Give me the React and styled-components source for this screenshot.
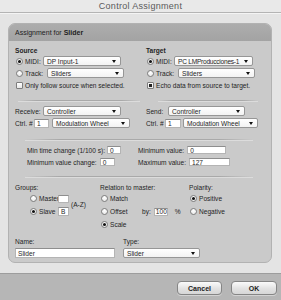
import styled, { createGlobalStyle } from "styled-components";

const GlobalStyle = createGlobalStyle`
  html, body {
    margin: 0;
    padding: 0;
  }
  body {
    font-family: "Liberation Sans", Arial, sans-serif;
    font-size: 6.6px;
    color: #1f1f1f;
  }
`;

const Window = styled.div`
  width: 281px;
  height: 300px;
  display: flex;
  flex-direction: column;
  background: #e4e4e4;
  overflow: hidden;
`;

const TitleBar = styled.div`
  height: 12px;
  flex: none;
  display: flex;
  align-items: center;
  justify-content: center;
  background: #e9e9e9;
  border-bottom: 1px solid #b4b4b4;
  box-shadow: 0 1px 0 #f4f4f4;
  font-size: 9px;
  color: #5a5a5a;
  letter-spacing: 0.3px;
`;

const Body = styled.div`
  flex: none;
  padding: 10px 9px 10px 8px;
`;

const Panel = styled.section`
  height: 240px;
  box-sizing: border-box;
  border: 1px solid #b2b2b2;
  border-radius: 7px;
  background: #cacaca;
  overflow: hidden;
  display: flex;
  flex-direction: column;
`;

const PanelHeader = styled.div`
  height: 17px;
  flex: none;
  display: flex;
  align-items: center;
  padding-left: 6px;
  background: linear-gradient(#adadad, #a3a3a3);
  font-size: 7px;
  color: #222;

  b {
    margin-left: 2px;
  }
`;

const Content = styled.div`
  padding: 0 13px 0 6px;
`;

const TwoCols = styled.div`
  display: grid;
  grid-template-columns: 131px 1fr;
  padding-top: 6px;
`;

const Column = styled.div`
  display: flex;
  flex-direction: column;
`;

const SectionTitle = styled.div`
  height: 8px;
  line-height: 8px;
  font-weight: bold;
`;

const Row = styled.div`
  height: ${(p) => p.$h || 12}px;
  display: flex;
  align-items: center;
  gap: ${(p) => p.$gap || 0}px;
`;

const Lead = styled.div`
  width: ${(p) => p.$w}px;
  flex: none;
  display: flex;
  align-items: center;
  gap: 2px;
  white-space: nowrap;
`;

const Radio = styled.span`
  width: 7px;
  height: 7px;
  box-sizing: border-box;
  flex: none;
  margin-left: 1px;
  border: 1px solid #7d7d7d;
  border-radius: 50%;
  background: radial-gradient(circle at 50% 30%, #ffffff, #e4e4e4);
  display: flex;
  align-items: center;
  justify-content: center;

  &::after {
    content: "";
    width: 3px;
    height: 3px;
    border-radius: 50%;
    background: ${(p) => (p.$on ? "#111" : "transparent")};
  }
`;

const Check = styled.span`
  width: 7px;
  height: 7px;
  box-sizing: border-box;
  flex: none;
  margin-left: 1px;
  border: 1px solid #7d7d7d;
  border-radius: 1px;
  background: linear-gradient(#ffffff, #e6e6e6);
  display: flex;
  align-items: center;
  justify-content: center;

  &::after {
    content: "";
    width: 3px;
    height: 3px;
    background: ${(p) => (p.$on ? "#222" : "transparent")};
  }
`;

const Select = styled.div`
  width: ${(p) => p.$w}px;
  height: 10px;
  flex: none;
  box-sizing: border-box;
  display: flex;
  align-items: center;
  justify-content: space-between;
  gap: 2px;
  padding: 0 4px 0 3px;
  margin-left: ${(p) => p.$ml || 0}px;
  border: 1px solid #969696;
  border-radius: 2px;
  background: linear-gradient(#ffffff, #f3f3f3);
  white-space: nowrap;
  overflow: hidden;
  letter-spacing: ${(p) => p.$tight ? "-0.25px" : "normal"};

  &::after {
    content: "";
    flex: none;
    border-left: 2.5px solid transparent;
    border-right: 2.5px solid transparent;
    border-top: 3px solid #111;
  }
`;

const Field = styled.div`
  width: ${(p) => p.$w}px;
  height: ${(p) => p.$h || 9}px;
  flex: none;
  box-sizing: border-box;
  display: flex;
  align-items: center;
  padding-left: ${(p) => p.$pl ?? 2}px;
  border: 1px solid #b4b4b4;
  border-top-color: #8e8e8e;
  background: #fff;
  white-space: nowrap;
  overflow: hidden;
  margin-left: ${(p) => p.$ml || 0}px;
`;

const Sep = styled.div`
  height: 1px;
  margin: ${(p) => p.$m};
  background: linear-gradient(
    to right,
    rgba(150, 150, 150, 0),
    #a9a9a9 15%,
    #a9a9a9 85%,
    rgba(150, 150, 150, 0)
  );
  box-shadow: 0 1px 0 rgba(255, 255, 255, 0.35);
`;

const Thresholds = styled.div`
  display: grid;
  grid-template-columns: 111px 1fr;
  padding-left: 12px;
  padding-top: 4px;
`;

const Bottom = styled.div`
  display: grid;
  grid-template-columns: 85px 89px 1fr;
  padding-top: 7px;
`;

const Label = styled.div`
  height: 8px;
  line-height: 8px;
  white-space: nowrap;
`;

const GroupGrid = styled.div`
  display: grid;
  grid-template-columns: 29px 12px auto;
  grid-template-rows: 13px 13px;
  align-items: center;
  padding-left: 14px;
`;

const AZ = styled.span`
  grid-column: 3;
  grid-row: 1 / span 2;
  align-self: center;
  padding-left: 1px;
  margin-top: -2px;
`;

const Unit = styled.span`
  margin-left: 7px;
`;

const NameRow = styled.div`
  display: grid;
  grid-template-columns: 108px 1fr;
  padding-top: 7px;
`;

const NameCol = styled.div`
  display: flex;
  flex-direction: column;
  gap: 2px;
`;

const Footer = styled.footer`
  flex: 1;
  display: flex;
  justify-content: flex-end;
  align-items: flex-start;
  gap: 9px;
  padding: 7px 4px 0 0;
  background: #b6b6b6;
  border-top: 1px solid #9d9d9d;
`;

const Button = styled.button`
  width: ${(p) => p.$w}px;
  height: 14px;
  padding: 0;
  border: 1px solid #858585;
  border-radius: 4px;
  background: linear-gradient(#fbfbfb, #e2e2e2 55%, #d6d6d6);
  box-shadow: 0 1px 0 rgba(255, 255, 255, 0.4);
  font-family: "Liberation Sans", Arial, sans-serif;
  font-size: 7px;
  font-weight: bold;
  color: #222;
`;

const RadioItem = ({ on, children, w }) => (
  <Lead $w={w}>
    <Radio $on={on} />
    <span>{children}</span>
  </Lead>
);

const App = () => (
  <>
    <GlobalStyle />
    <Window>
      <TitleBar>Control Assignment</TitleBar>
      <Body>
        <Panel>
          <PanelHeader>
            Assignment for <b>Slider</b>
          </PanelHeader>
          <Content>
            <TwoCols>
              <Column>
                <SectionTitle>Source</SectionTitle>
                <Row>
                  <RadioItem on w={28}>MIDI:</RadioItem>
                  <Select $w={78}>DP Input-1</Select>
                </Row>
                <Row>
                  <RadioItem w={32}>Track:</RadioItem>
                  <Select $w={77}>Sliders</Select>
                </Row>
                <Row $gap={2}>
                  <Check />
                  <span>Only follow source when selected.</span>
                </Row>
                <Sep $m="9px 6px 4px 3px" />
                <Row>
                  <Lead $w={28}>Receive:</Lead>
                  <Select $w={78}>Controller</Select>
                </Row>
                <Row>
                  <Lead $w={19}>Ctrl. #</Lead>
                  <Field $w={15}>1</Field>
                  <Select $w={78} $ml={3}>Modulation Wheel</Select>
                </Row>
              </Column>
              <Column>
                <SectionTitle>Target</SectionTitle>
                <Row>
                  <RadioItem on w={28}>MIDI:</RadioItem>
                  <Select $w={79} $tight>PC LMProducciones-1</Select>
                </Row>
                <Row>
                  <RadioItem w={32}>Track:</RadioItem>
                  <Select $w={77}>Sliders</Select>
                </Row>
                <Row $gap={2}>
                  <Check $on />
                  <span>Echo data from source to target.</span>
                </Row>
                <Sep $m="9px 0 4px 12px" />
                <Row>
                  <Lead $w={22}>Send:</Lead>
                  <Select $w={77}>Controller</Select>
                </Row>
                <Row>
                  <Lead $w={19}>Ctrl. #</Lead>
                  <Field $w={16}>1</Field>
                  <Select $w={75} $ml={2}>Modulation Wheel</Select>
                </Row>
              </Column>
            </TwoCols>

            <Sep $m="10px 5px 0 10px" />

            <Thresholds>
              <Row $gap={2}>
                <span>Min time change (1/100 s):</span>
                <Field $w={14} $h={8}>0</Field>
              </Row>
              <Row $gap={3}>
                <span>Minimum value:</span>
                <Field $w={39} $h={8}>0</Field>
              </Row>
              <Row $gap={3}>
                <span>Minimum value change:</span>
                <Field $w={15} $h={8}>0</Field>
              </Row>
              <Row $gap={3}>
                <span>Maximum value:</span>
                <Field $w={41} $h={8}>127</Field>
              </Row>
            </Thresholds>

            <Sep $m="8px 5px 0 10px" />

            <Bottom>
              <Column>
                <Label>Groups:</Label>
                <GroupGrid>
                  <RadioItem w={29}>Master</RadioItem>
                  <Field $w={11} $h={8} />
                  <RadioItem on w={29}>Slave</RadioItem>
                  <Field $w={11} $h={9}>B</Field>
                  <AZ>(A-Z)</AZ>
                </GroupGrid>
              </Column>
              <Column>
                <Label>Relation to master:</Label>
                <Row $h={13}>
                  <RadioItem w={42}>Match</RadioItem>
                </Row>
                <Row $h={13}>
                  <RadioItem w={42}>Offset</RadioItem>
                  <span>by:</span>
                  <Field $w={14} $h={8} $ml={3} $pl={1}>100</Field>
                  <Unit>%</Unit>
                </Row>
                <Row $h={13}>
                  <RadioItem on w={42}>Scale</RadioItem>
                </Row>
              </Column>
              <Column>
                <Label>Polarity:</Label>
                <Row $h={13}>
                  <RadioItem on w={60}>Positive</RadioItem>
                </Row>
                <Row $h={13}>
                  <RadioItem w={60}>Negative</RadioItem>
                </Row>
              </Column>
            </Bottom>

            <NameRow>
              <NameCol>
                <Label>Name:</Label>
                <Field $w={100} $h={10}>Slider</Field>
              </NameCol>
              <NameCol>
                <Label>Type:</Label>
                <Select $w={77}>Slider</Select>
              </NameCol>
            </NameRow>
          </Content>
        </Panel>
      </Body>
      <Footer>
        <Button $w={45}>Cancel</Button>
        <Button $w={46}>OK</Button>
      </Footer>
    </Window>
  </>
);

export default App;
